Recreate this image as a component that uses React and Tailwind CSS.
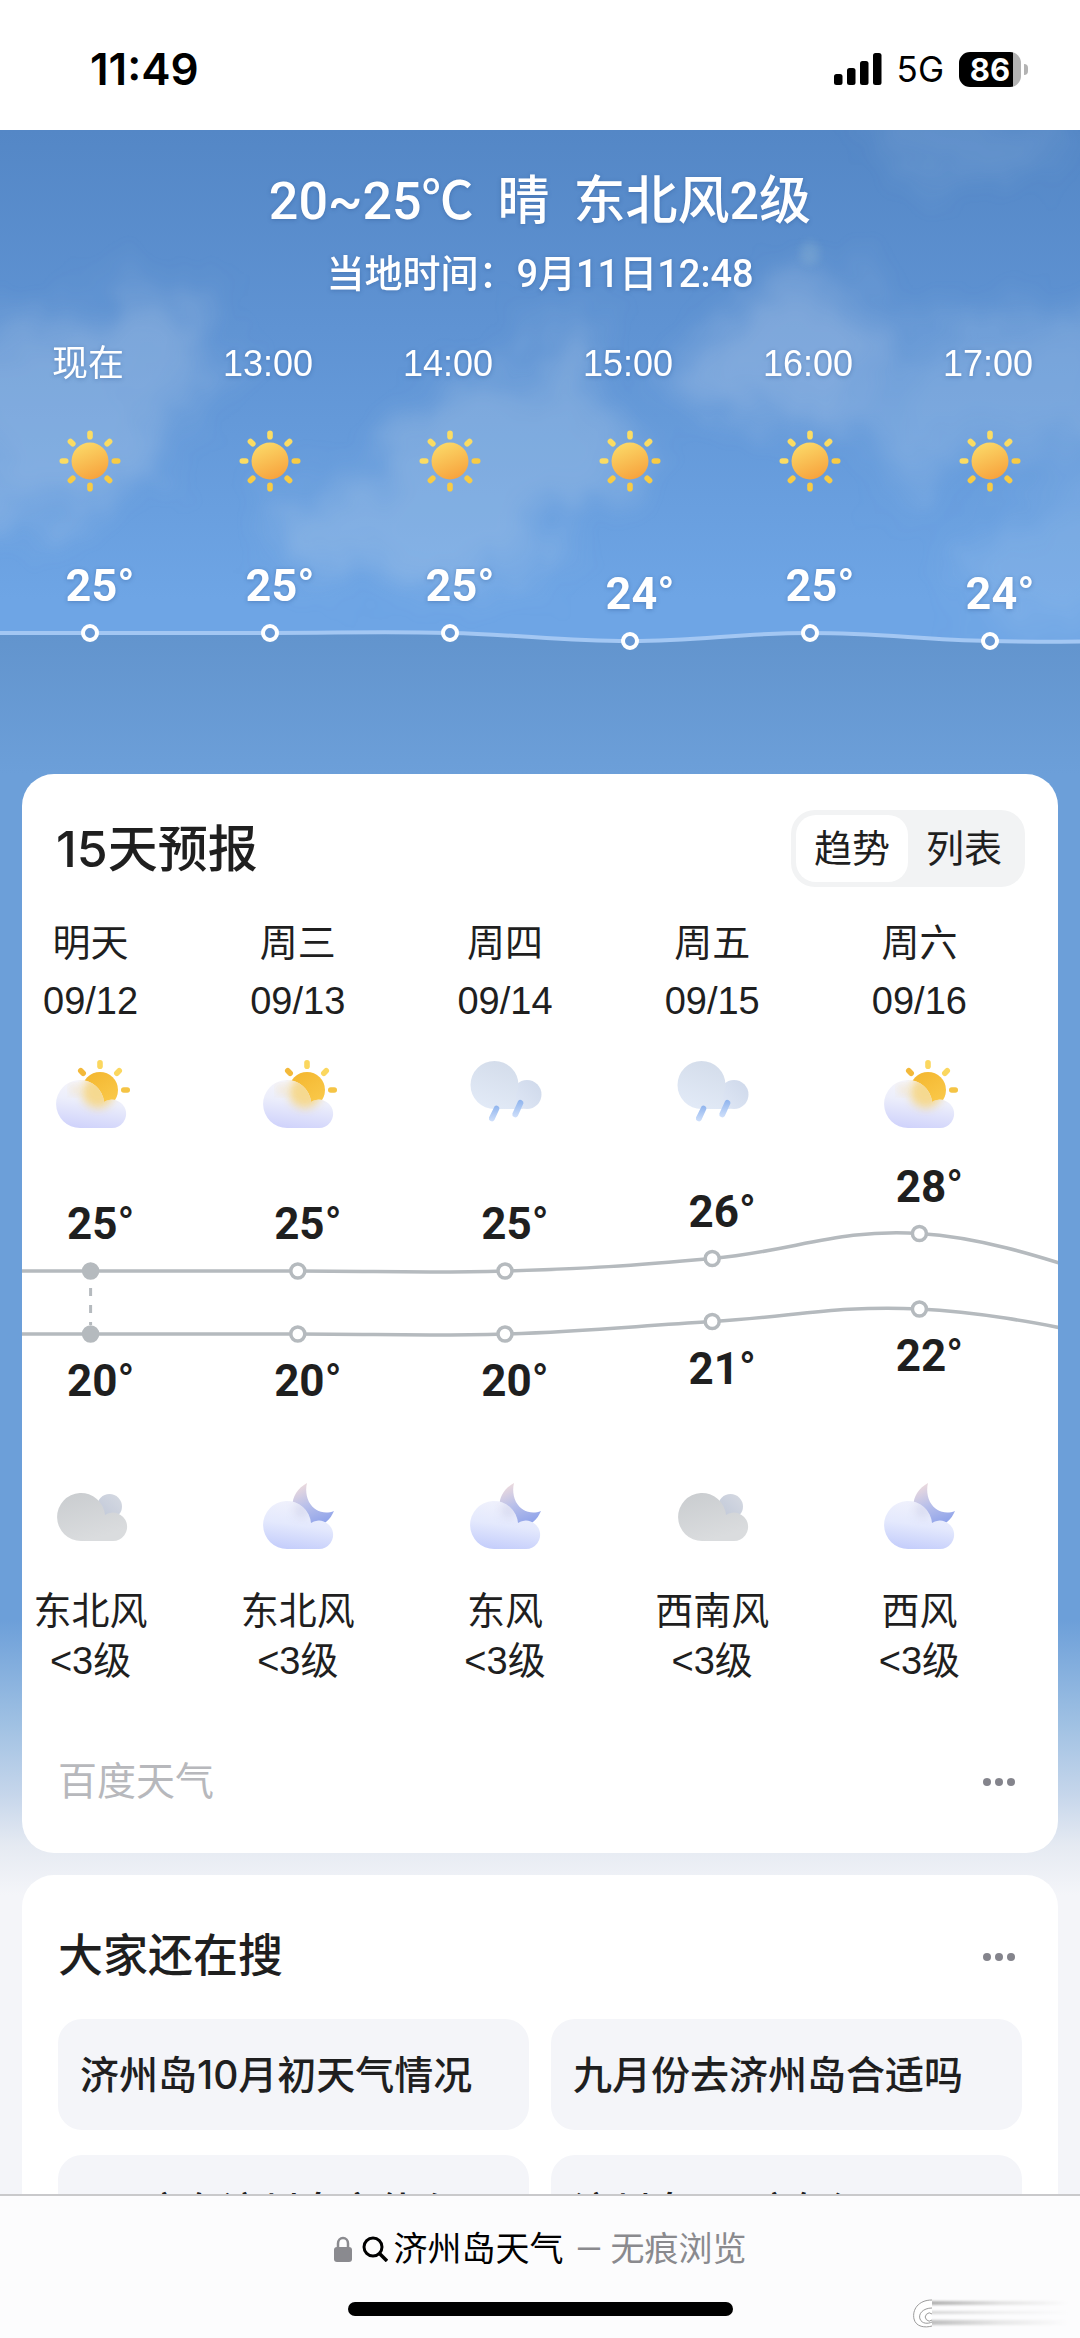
import { useState } from 'react'

const hours = [
  { time: '现在', temp: 25 },
  { time: '13:00', temp: 25 },
  { time: '14:00', temp: 25 },
  { time: '15:00', temp: 24 },
  { time: '16:00', temp: 25 },
  { time: '17:00', temp: 24 },
]

const days = [
  { name: '明天', date: '09/12', day: 'suncloud', high: 25, low: 20, night: 'cloudy', wind: '东北风' },
  { name: '周三', date: '09/13', day: 'suncloud', high: 25, low: 20, night: 'mooncloud', wind: '东北风' },
  { name: '周四', date: '09/14', day: 'rain', high: 25, low: 20, night: 'mooncloud', wind: '东风' },
  { name: '周五', date: '09/15', day: 'rain', high: 26, low: 21, night: 'cloudy', wind: '西南风' },
  { name: '周六', date: '09/16', day: 'suncloud', high: 28, low: 22, night: 'mooncloud', wind: '西风' },
]

const searches = ['济州岛10月初天气情况', '九月份去济州岛合适吗', '9月底在济州岛穿什么', '济州岛9月底气温']

// smooth curve through all points
function curve(pts) {
  let d = `M${pts[0][0]} ${pts[0][1]}`
  for (let i = 0; i < pts.length - 1; i++) {
    const p0 = pts[i - 1] || pts[i]
    const p1 = pts[i]
    const p2 = pts[i + 1]
    const p3 = pts[i + 2] || p2
    d += ` C${p1[0] + (p2[0] - p0[0]) / 5} ${p1[1] + (p2[1] - p0[1]) / 5} ${p2[0] - (p3[0] - p1[0]) / 5} ${p2[1] - (p3[1] - p1[1]) / 5} ${p2[0]} ${p2[1]}`
  }
  return d
}

const hourY = (t) => 131 + (25 - t) * 8
const highY = (t) => 135 - (t - 25) * 12.5
const lowY = (t) => 198 - (t - 20) * 12.5

const CLOUD = 'M29 73a24 24 0 1 1 24-26a14.200 14.200 0 1 1 8 26z'

function Defs() {
  return (
    <svg className="absolute size-0" aria-hidden="true">
      <defs>
        <linearGradient id="sun" x1="0.3" y1="0" x2="0.7" y2="1"><stop offset="0" stopColor="#fbd968" /><stop offset="1" stopColor="#f7a13c" /></linearGradient>
        <linearGradient id="sun2" x1="0" y1="0" x2="0.6" y2="1"><stop offset="0" stopColor="#f3b52d" /><stop offset="1" stopColor="#fac94a" /></linearGradient>
        <linearGradient id="pale" x1="0.6" y1="0" x2="0.4" y2="1"><stop offset="0" stopColor="#f7f6fb" /><stop offset="0.45" stopColor="#eceefb" /><stop offset="1" stopColor="#d0d3fb" /></linearGradient>
        <linearGradient id="night" x1="0.6" y1="0" x2="0.4" y2="1"><stop offset="0" stopColor="#f1f2fc" /><stop offset="0.5" stopColor="#e4e9fd" /><stop offset="1" stopColor="#c5cefb" /></linearGradient>
        <linearGradient id="rain" x1="0.7" y1="0" x2="0.3" y2="1"><stop offset="0" stopColor="#d3dcea" /><stop offset="1" stopColor="#e2eaf7" /></linearGradient>
        <linearGradient id="rain2" x1="0" y1="1" x2="1" y2="0"><stop offset="0" stopColor="#e0e8f6" /><stop offset="1" stopColor="#ced8ea" /></linearGradient>
        <linearGradient id="drop" x1="0" y1="0" x2="0" y2="1"><stop offset="0" stopColor="#8fb4ee" /><stop offset="1" stopColor="#cfdffa" /></linearGradient>
        <linearGradient id="gray" x1="0" y1="0" x2="0.4" y2="1"><stop offset="0" stopColor="#c9cccf" /><stop offset="1" stopColor="#dadcde" /></linearGradient>
        <linearGradient id="grayback" x1="1" y1="0" x2="0" y2="1"><stop offset="0" stopColor="#d6dae2" /><stop offset="1" stopColor="#bfc7d8" /></linearGradient>
        <linearGradient id="moon" x1="0.2" y1="0" x2="0.6" y2="1"><stop offset="0" stopColor="#f0dcdc" /><stop offset="0.5" stopColor="#b9c0ea" /><stop offset="1" stopColor="#8fa3ea" /></linearGradient>
        <filter id="soft" x="-50%" y="-50%" width="200%" height="200%"><feGaussianBlur stdDeviation="4" /></filter>
        <clipPath id="cloudclip"><path d={CLOUD} /></clipPath>
      </defs>
    </svg>
  )
}

function Sun() {
  return (
    <svg viewBox="0 0 80 80" className="size-20">
      {[0, 45, 90, 135, 180, 225, 270, 315].map((a) => (
        <rect key={a} x="37.200" y="9.500" width="5.600" height="9" rx="2.800" fill={a > 60 && a < 260 ? '#f8cb45' : '#fbdc63'} transform={`rotate(${a} 40 40)`} />
      ))}
      <circle cx="40" cy="40" r="18.500" fill="url(#sun)" />
    </svg>
  )
}

function SunCloud() {
  return (
    <svg viewBox="0 0 80 80" className="size-20">
      <g fill="#fbd75f">
        <rect x="46.200" y="5" width="5.600" height="9" rx="2.800" />
        <rect x="46.200" y="5" width="5.600" height="9" rx="2.800" transform="rotate(45 49 35)" />
        <rect x="46.200" y="5" width="5.600" height="9" rx="2.800" fill="#f5c445" transform="rotate(90 49 35)" />
        <rect x="46.200" y="5" width="5.600" height="9" rx="2.800" fill="#f3b93a" transform="rotate(-45 49 35)" />
      </g>
      <circle cx="49" cy="35" r="18" fill="url(#sun2)" />
      <path d={CLOUD} fill="url(#pale)" />
      <g clipPath="url(#cloudclip)">
        <circle cx="47" cy="37" r="16" fill="#f6d684" opacity="0.9" filter="url(#soft)" />
        <circle cx="24" cy="35" r="4" fill="#f6dfa8" opacity="0.7" filter="url(#soft)" />
      </g>
    </svg>
  )
}

function Rain() {
  return (
    <svg viewBox="0 0 80 80" className="size-20">
      <circle cx="62" cy="39.500" r="14.500" fill="url(#rain2)" />
      <path d="M62 54H29.500a24 24 0 1 1 24-24q0 3-1 6q-3 6 0 12q3 6 9.500 6z" fill="url(#rain)" />
      <path d="M29.600 51.200a3 3 0 0 1 4.800 2.800l-5 11a3 3 0 0 1-5.400-2.400z" fill="url(#drop)" />
      <path d="M53 46.200a3 3 0 0 1 5.400 2.400l-5.600 12.400a3 3 0 0 1-5.400-2.400z" fill="url(#drop)" />
    </svg>
  )
}

function Cloudy() {
  return (
    <svg viewBox="0 0 80 80" className="size-20">
      <circle cx="58.500" cy="30.500" r="12.500" fill="url(#grayback)" />
      <path d={CLOUD} fill="url(#gray)" transform="translate(1 -8)" />
    </svg>
  )
}

function MoonCloud() {
  return (
    <svg viewBox="0 0 80 80" className="size-20">
      <path d="M49 7C36 14 32 27 36 37C42 52 62 52 68 46C72 43 74 39 76 35C66 39 56 35 51 26C48 20 47.500 13 49 7z" fill="url(#moon)" />
      <path d={CLOUD} fill="url(#night)" />
      <g clipPath="url(#cloudclip)"><circle cx="44" cy="34" r="8" fill="#c9cbe6" opacity="0.5" filter="url(#soft)" /></g>
    </svg>
  )
}

const icons = { suncloud: SunCloud, rain: Rain, cloudy: Cloudy, mooncloud: MoonCloud }

function StatusBar() {
  return (
    <header className="flex h-[130px] shrink-0 items-center justify-between bg-white pt-2 pr-[52px] pl-[90px] text-black">
      <span className="font-[Inter] text-[44px] leading-none font-semibold">11:49</span>
      <div className="flex items-center gap-[15px]">
        <svg viewBox="0 0 48 32" className="h-8 w-12">
          <rect x="0" y="21" width="8.500" height="11" rx="2.500" />
          <rect x="13" y="15" width="8.500" height="17" rx="2.500" />
          <rect x="26" y="8" width="8.500" height="24" rx="2.500" />
          <rect x="39" y="0" width="8.500" height="32" rx="2.500" />
        </svg>
        <span className="font-[Inter] text-[35px] leading-none">5G</span>
        <div className="flex items-center gap-[3px]">
          <div className="flex h-[35px] w-[62px] items-center justify-center overflow-hidden rounded-[11px] bg-[linear-gradient(90deg,#000_54px,#b3b3b3_54px)]">
            <span className="font-[Inter] text-[31px] leading-none font-bold text-white">86</span>
          </div>
          <div className="h-[11px] w-1 rounded-r-full bg-[#b3b3b3]" />
        </div>
      </div>
    </header>
  )
}

function SkyClouds() {
  return (
    <svg viewBox="0 130 1080 510" preserveAspectRatio="none" className="absolute inset-x-0 top-0 h-[510px] w-full" aria-hidden="true">
      <defs>
        <filter id="wisp" x="-10%" y="-10%" width="120%" height="120%">
          <feGaussianBlur stdDeviation="20" result="b" />
          <feTurbulence type="fractalNoise" baseFrequency="0.012" numOctaves="3" seed="8" />
          <feDisplacementMap in="b" scale="80" xChannelSelector="R" yChannelSelector="G" result="d" />
          <feGaussianBlur in="d" stdDeviation="3" />
        </filter>
      </defs>
      <g fill="#cfe0f0" filter="url(#wisp)">
        <path opacity="0.26" d="M-40 320L60 340L90 300L210 300L215 370L190 430L150 380L160 460L120 500L-40 520z" />
        <path opacity="0.24" d="M540 320L590 320L600 400L640 440L610 490L540 520L560 560L440 590L290 560L270 500L360 490L400 430L440 380L530 370z" />
        <path opacity="0.28" d="M700 340L790 280L880 290L870 400L860 440L780 420L690 400z" />
        <path opacity="0.22" d="M900 340L1120 300L1120 460L960 440L900 520L870 440z" />
        <path opacity="0.16" d="M960 560L1050 480L1120 480L1120 640L980 620z" />
        <path opacity="0.12" d="M860 120L1060 120L1040 180L900 180z" />
      </g>
      <ellipse cx="810" cy="253" rx="10" ry="12" fill="#cfe6dc" opacity="0.15" filter="url(#soft)" />
    </svg>
  )
}

function HourChart() {
  const pts = [[-90, 131], ...hours.map((h, i) => [90 + i * 180, hourY(h.temp)]), [1170, 139]]
  const d = curve(pts)
  return (
    <div className="relative h-[272px]">
      <svg viewBox="0 0 1080 272" preserveAspectRatio="none" className="absolute inset-0 size-full">
        <defs>
          <linearGradient id="hill" x1="0" y1="0" x2="0" y2="1"><stop offset="0" stopColor="#6294cd" /><stop offset="1" stopColor="#6c9fd9" /></linearGradient>
        </defs>
        <path d={`${d} V272 H-90z`} fill="url(#hill)" />
        <path d={d} fill="none" stroke="#a3c7f3" strokeWidth="4" />
        {pts.slice(1, 7).map(([x, y]) => <circle key={x} cx={x} cy={y} r="7" fill="#6798d4" stroke="#fff" strokeWidth="4" />)}
      </svg>
      <div className="relative grid grid-cols-6">
        {hours.map((h) => (
          <span key={h.time} style={{ paddingTop: hourY(h.temp) - 71 }} className="pl-5 text-center font-[Roboto] text-[45px] leading-12 font-bold text-shadow-[0_1px_4px_rgb(40_80_140/0.4)]">
            {h.temp}<span className="font-medium">°</span>
          </span>
        ))}
      </div>
    </div>
  )
}

function Hero() {
  return (
    <section className="relative text-white">
      <SkyClouds />
      <div className="relative pt-[42px] text-shadow-[0_1px_4px_rgb(40_80_140/0.4)]">
        <h1 className="flex justify-center gap-6 font-[Roboto,'Noto_Sans_CJK_SC',sans-serif] text-[52px] leading-[60px] font-medium">
          <span>20~25℃</span><span>晴</span><span>东北风2级</span>
        </h1>
        <p className="mt-3 text-center font-[Roboto,'Noto_Sans_CJK_SC',sans-serif] text-[38px] leading-[60px] font-medium">当地时间：9月11日12:48</p>
        <div className="mt-[30px] grid grid-cols-6">
          {hours.map((h) => (
            <div key={h.time} className="flex flex-col items-center gap-[27px]">
              <span className="pr-1 text-[36px] leading-[60px]">{h.time}</span>
              <Sun />
            </div>
          ))}
        </div>
      </div>
      <div className="pt-px">
        <HourChart />
      </div>
    </section>
  )
}

function DayChart() {
  const x = (i) => 103.6 + i * 207.2
  const highs = [[-104, 135], ...days.map((d, i) => [x(i), highY(d.high)]), [x(5), highY(24)]]
  const lows = [[-104, 198], ...days.map((d, i) => [x(i), lowY(d.low)]), [x(5), lowY(19.5)]]
  return (
    <svg viewBox="0 0 1036 340" preserveAspectRatio="none" className="absolute inset-0 size-full overflow-visible" fill="none" stroke="#b5babe">
      <path d={curve(highs)} strokeWidth="3.500" />
      <path d={curve(lows)} strokeWidth="3.500" />
      <path d={`M${x(0)} 152V189`} strokeWidth="3" strokeDasharray="8 9" />
      {[...highs.slice(1, 6), ...lows.slice(1, 6)].map(([cx, cy], i) => (
        <circle key={i} cx={cx} cy={cy} r="7" strokeWidth="3.500" fill={i % 5 === 0 ? '#b5babe' : '#fff'} />
      ))}
    </svg>
  )
}

function More() {
  return (
    <button aria-label="更多" className="flex gap-1 py-3 pr-[7px] pl-3">
      <i className="size-2 rounded-full bg-[#84848c]" />
      <i className="size-2 rounded-full bg-[#84848c]" />
      <i className="size-2 rounded-full bg-[#84848c]" />
    </button>
  )
}

function Forecast() {
  const [tab, setTab] = useState('趋势')
  return (
    <section className="mx-[22px] overflow-hidden rounded-[32px] bg-white pt-9 pb-[46px]">
      <div className="flex items-center justify-between pr-[33px] pl-[34px]">
        <h2 className="font-[Inter,'Noto_Sans_CJK_SC',sans-serif] text-[50px] leading-[60px] font-medium">15天预报</h2>
        <div className="flex rounded-3xl bg-[#f2f3f4] p-[5px]">
          {['趋势', '列表'].map((t) => (
            <button key={t} onClick={() => setTab(t)} className={`h-[67px] rounded-[20px] px-[18px] pt-[2px] text-[38px] ${tab === t ? 'bg-white' : ''}`}>{t}</button>
          ))}
        </div>
      </div>
      <div className="mt-[27px] mr-[35px] -ml-[35px] text-[38px]">
        <div className="grid grid-cols-5">
          {days.map((d) => {
            const Icon = icons[d.day]
            return (
              <div key={d.date} className="flex flex-col items-center leading-[58px]">
                <span>{d.name}</span>
                <span className="mb-[25px]">{d.date}</span>
                <Icon />
              </div>
            )
          })}
        </div>
        <div className="relative mt-px h-[340px]">
          <DayChart />
          <div className="relative grid grid-cols-5 font-[Roboto] text-[44px] leading-12 font-bold">
            {days.map((d) => (
              <div key={d.date} style={{ paddingTop: highY(d.high) - 71 }} className="flex flex-col pl-5 text-center">
                <span>{d.high}<span className="font-medium">°</span></span>
                <span style={{ marginTop: lowY(d.low) - highY(d.high) + 46 }}>{d.low}<span className="font-medium">°</span></span>
              </div>
            ))}
          </div>
        </div>
        <div className="grid grid-cols-5">
          {days.map((d) => {
            const Icon = icons[d.night]
            return (
              <div key={d.date} className="flex flex-col items-center leading-[50px]">
                <Icon />
                <span className="mt-[30px]">{d.wind}</span>
                <span>&lt;3级</span>
              </div>
            )
          })}
        </div>
      </div>
      <div className="mt-[71px] flex items-center justify-between px-[36px]">
        <span className="text-[39px] leading-[50px] text-[#b7b8bc]">百度天气</span>
        <More />
      </div>
    </section>
  )
}

function Related() {
  return (
    <section className="mx-[22px] mt-[22px] rounded-t-[32px] bg-white px-[36px] pt-[52px] pb-9">
      <div className="flex items-center justify-between">
        <h2 className="text-[45px] leading-[60px] font-medium">大家还在搜</h2>
        <More />
      </div>
      <div className="mt-8 grid grid-cols-2 gap-x-[22px] gap-y-[25px]">
        {searches.map((s) => (
          <a key={s} href="#" className="flex h-[111px] items-center rounded-3xl bg-[#f4f5f9] px-[22px] pt-px font-[Inter,'Noto_Sans_CJK_SC',sans-serif] text-[39px] leading-[50px] font-medium whitespace-nowrap">{s}</a>
        ))}
      </div>
    </section>
  )
}

function BottomBar() {
  return (
    <footer className="relative flex h-36 shrink-0 flex-col items-center border-t-2 border-[#c9c9cb] bg-[#fcfcfd]">
      <div className="mt-[28px] flex items-center text-[34px] leading-[50px] text-black">
        <svg viewBox="0 0 18 26" className="mr-[10px] h-[26px] w-[18px]">
          <rect y="11" width="18" height="15" rx="3" fill="#8a8a8f" />
          <path d="M4 12V7.500a5 5.500 0 0 1 10 0V12" fill="none" stroke="#8a8a8f" strokeWidth="2.500" />
        </svg>
        <svg viewBox="0 0 26 26" className="mr-[6px] size-[26px]" fill="none" stroke="#000" strokeWidth="3">
          <circle cx="11" cy="11" r="9" />
          <path d="M17.500 17.500L25 25" strokeWidth="3.500" />
        </svg>
        <span>济州岛天气</span>
        <span className="ml-3 font-[Roboto,'Noto_Sans_CJK_SC',sans-serif] text-[#8a8a8e]">— 无痕浏览</span>
      </div>
      <div className="mt-[28px] h-[14px] w-[385px] rounded-full bg-black" />
      <svg viewBox="0 0 160 32" className="absolute right-2 bottom-2 h-8 w-40" aria-hidden="true">
        <defs>
          <linearGradient id="streak" x1="0" x2="1"><stop offset="0" stopColor="#b0b0b0" /><stop offset="0.5" stopColor="#e2e2e2" /><stop offset="1" stopColor="#fcfcfd" /></linearGradient>
          <filter id="blurline"><feGaussianBlur stdDeviation="0 1.200" /></filter>
        </defs>
        <g filter="url(#blurline)">
          <rect x="20" y="3" width="136" height="4" fill="url(#streak)" />
          <rect x="20" y="13" width="136" height="3" fill="url(#streak)" opacity="0.5" />
          <rect x="20" y="22" width="136" height="5" fill="url(#streak)" opacity="0.8" />
        </g>
        <path d="M20 2C6 2 0 12 2 21C4 29 13 30 20 28M20 10C11 10 6 16 8 21C10 26 16 26 20 24M20 16a4 4 0 1 0 0 6" fill="#fff" stroke="#9a9a9a" strokeWidth="1" />
      </svg>
    </footer>
  )
}

export default function App() {
  return (
    <div className="flex h-screen flex-col overflow-hidden bg-white font-['Liberation_Sans','Noto_Sans_CJK_SC',sans-serif] text-[#1f1f1f]">
      <Defs />
      <StatusBar />
      <main className="min-h-0 flex-1 overflow-hidden bg-[#f4f5f9] bg-[linear-gradient(180deg,#5487c6_0,#5f93d3_200px,#6ea5e5_470px,#6ea5e5_510px,#6c9fd9_640px,#6c9fd9_1490px,#a0c1e3_1595px,#c6d6eb_1665px,#e5eaf2_1715px,#f4f5f9_1765px)]">
        <Hero />
        <Forecast />
        <Related />
      </main>
      <BottomBar />
    </div>
  )
}
